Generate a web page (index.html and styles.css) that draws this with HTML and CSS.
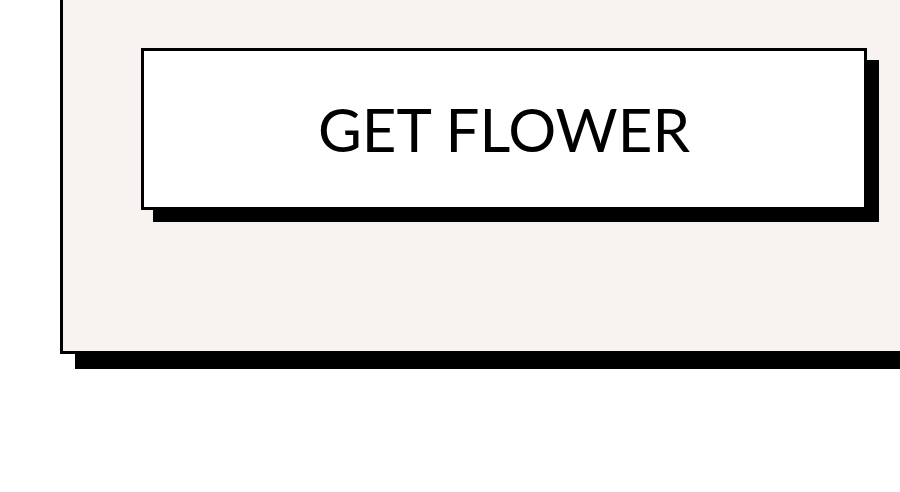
FILE: index.html
```html
<!DOCTYPE html>
<html lang="en">
<head>
    <meta charset="UTF-8">
    <meta name="viewport" content="width=device-width, initial-scale=1.0">
    <title>Get Flower</title>
    <link rel="stylesheet" href="styles.css">
</head>
<body>
    <div class="flower-card">
        <button type="button" class="btn-flower">GET FLOWER</button>
    </div>
</body>
</html>
```

FILE: styles.css
```css
:root {
    --ink: #000;
    --paper: #f8f3f0;
}

html,
body {
    height: 100%;
}

body {
    font-family: 'Lato', sans-serif;
    margin: 0;
    padding: 0;
    background: white;
}

/* card runs off the top and right of the window */
.flower-card {
    box-sizing: border-box;
    margin-left: 60px;
    padding: 48px 0 141px 78px;
    background: var(--paper);
    border: 3px solid var(--ink);
    border-top: none;
    border-right: none;
    box-shadow: 15px 15px 0 var(--ink);
}

.btn-flower {
    display: flex;
    align-items: center;
    justify-content: center;
    box-sizing: border-box;
    width: 726px;
    height: 162px;
    padding: 0;
    background: white;
    color: var(--ink);
    border: 3px solid var(--ink);
    border-radius: 0;
    box-shadow: 12px 12px 0 var(--ink);
    font-family: 'Lato', sans-serif;
    font-size: 60px;
    font-weight: 400;
    cursor: pointer;
}
```
